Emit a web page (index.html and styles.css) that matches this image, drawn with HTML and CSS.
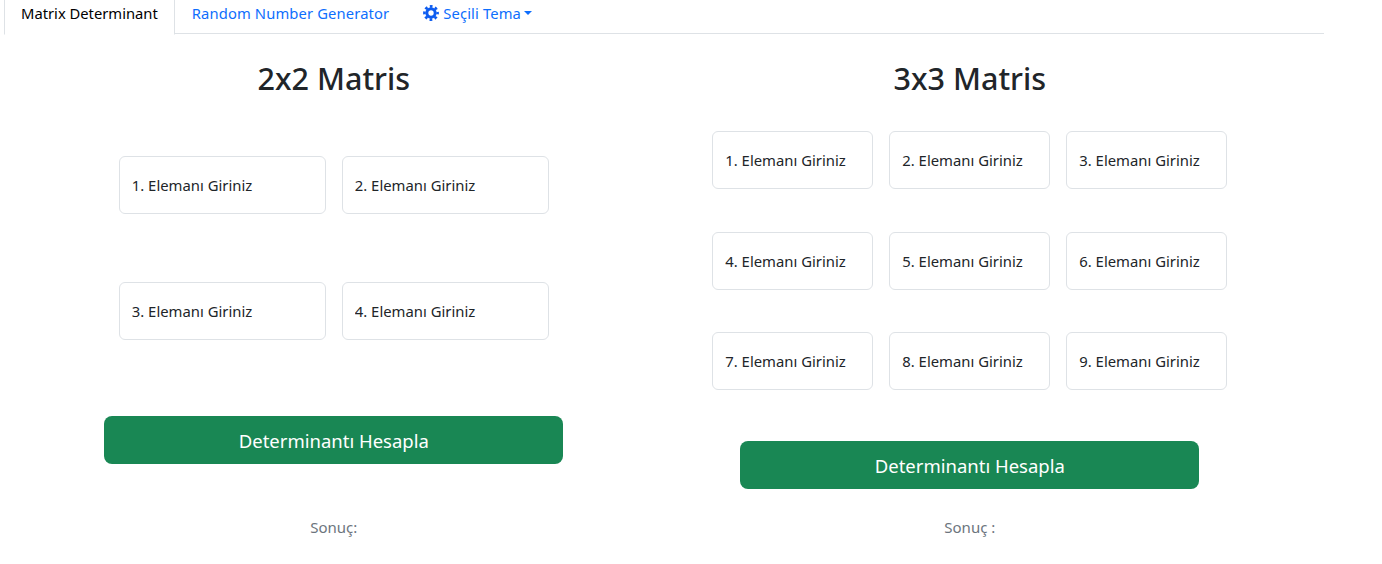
FILE: index.html
```html
<!DOCTYPE html>
<html lang="en">
<head>
  <meta charset="UTF-8">
  <title>Matrix Determinant</title>
  <link rel="stylesheet" href="styles.css">
</head>
<body>
  <ul class="nav-tabs">
    <li><a class="tab active" href="#">Matrix Determinant</a></li>
    <li><a class="tab" href="#">Random Number Generator</a></li>
    <li>
      <a class="tab theme" href="#">
        <svg class="gear" viewBox="0 0 16 16" width="16" height="16" fill="none" stroke="#0d5cf0">
          <circle cx="8" cy="8" r="6.6" stroke-width="2.6" stroke-dasharray="2.7 2.48" stroke-dashoffset="1.35"/>
          <circle cx="8" cy="8" r="4.2" stroke-width="3"/>
        </svg>
        Seçili Tema<span class="caret"></span>
      </a>
    </li>
  </ul>

  <main class="columns">
    <section class="matrix matrix-two">
      <h1>2x2 Matris</h1>
      <div class="cells cells-two">
        <input type="text" placeholder="1. Elemanı Giriniz">
        <input type="text" placeholder="2. Elemanı Giriniz">
        <input type="text" placeholder="3. Elemanı Giriniz">
        <input type="text" placeholder="4. Elemanı Giriniz">
      </div>
      <button class="calc">Determinantı Hesapla</button>
      <p class="result">Sonuç:</p>
    </section>

    <section class="matrix matrix-three">
      <h1>3x3 Matris</h1>
      <div class="cells cells-three">
        <input type="text" placeholder="1. Elemanı Giriniz">
        <input type="text" placeholder="2. Elemanı Giriniz">
        <input type="text" placeholder="3. Elemanı Giriniz">
        <input type="text" placeholder="4. Elemanı Giriniz">
        <input type="text" placeholder="5. Elemanı Giriniz">
        <input type="text" placeholder="6. Elemanı Giriniz">
        <input type="text" placeholder="7. Elemanı Giriniz">
        <input type="text" placeholder="8. Elemanı Giriniz">
        <input type="text" placeholder="9. Elemanı Giriniz">
      </div>
      <button class="calc">Determinantı Hesapla</button>
      <p class="result">Sonuç :</p>
    </section>
  </main>
</body>
</html>
```

FILE: styles.css
```css
body {
  margin: 0;
  font-family: "Noto Sans", "Open Sans", Arial, sans-serif;
  font-size: 14.85px;
  color: #212529;
  background: #fff;
  overflow: hidden;
}
.nav-tabs {
  display: flex;
  list-style: none;
  margin: 0 58px 0 4px;
  padding: 0;
  height: 33px;
  border-bottom: 1px solid #dee2e6;
}
.tab {
  display: flex;
  align-items: center;
  height: 25px;
  padding: 0 16px 9px;
  color: #0d6efd;
  text-decoration: none;
  border: 1px solid transparent;
  border-top: 0;
  font-size: 14.75px;
  letter-spacing: 0.13px;
}
.tab.active {
  color: #000;
  background: #fff;
  border-color: #dee2e6;
  border-bottom: 1px solid #fff;
  letter-spacing: 0;
}
.gear {
  margin-right: 4px;
}
.caret {
  margin-left: 3px;
  border-top: 4.8px solid #0d6efd;
  border-left: 4.2px solid transparent;
  border-right: 4.2px solid transparent;
}
.columns {
  display: grid;
  grid-template-columns: 636px 636px;
  margin-left: 15.8px;
}
.matrix {
  display: flex;
  flex-direction: column;
  align-items: center;
  height: 530px;
}
h1 {
  margin: 24px 0 0;
  font-size: 30.5px;
  line-height: 40px;
  font-weight: 500;
}
.cells {
  display: grid;
  column-gap: 16px;
}
.cells-two {
  grid-template-columns: 207px 207px;
  row-gap: 68px;
  margin-top: 58px;
}
.cells-three {
  grid-template-columns: 161px 161px 161px;
  row-gap: 42.5px;
  margin-top: 33px;
}
input {
  box-sizing: border-box;
  width: 100%;
  height: 58px;
  padding: 0 12px;
  font: inherit;
  border: 1px solid #dee2e6;
  border-radius: 6px;
  background: #fff;
}
input::placeholder {
  color: #212529;
  opacity: 1;
}
.calc {
  width: 459px;
  height: 48px;
  border: 0;
  border-radius: 8px;
  background: #198754;
  color: #fff;
  font: inherit;
  font-size: 18.5px;
}
.matrix-two .calc {
  margin-top: 76px;
}
.matrix-three .calc {
  margin-top: 51px;
}
.result {
  margin: 0;
  color: #6c757d;
  font-size: 15px;
  line-height: 24px;
}
.matrix-two .result {
  margin-top: 51px;
}
.matrix-three .result {
  margin-top: 26px;
}
```
